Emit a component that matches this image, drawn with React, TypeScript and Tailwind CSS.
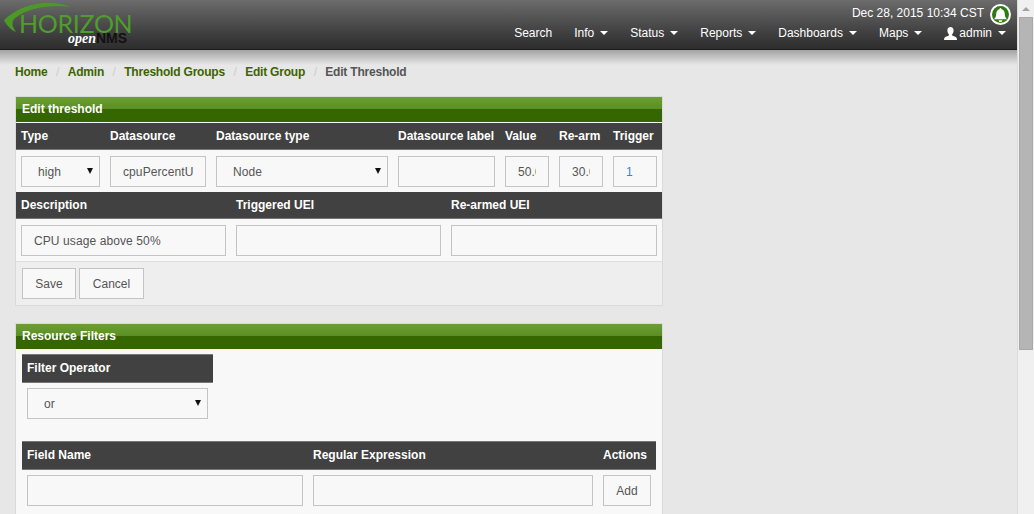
import React from "react";

const navItems = ["Info", "Status", "Reports", "Dashboards", "Maps"];
const crumbs = ["Home", "Admin", "Threshold Groups", "Edit Group"];

const inputClass =
  "w-full h-[31px] border border-[#c4c4c4] bg-[#f8f8f8] px-3 text-[12px] tracking-[0.1px] outline-none";

const Caret = () => (
  <span className="inline-block ml-[6px] w-0 h-0 border-x-[4px] border-x-transparent border-t-[4px] border-t-white" />
);

const Field = ({ value = "", blue = false }: { value?: string; blue?: boolean }) => (
  <input readOnly value={value} className={inputClass + (blue ? " text-[#3b86c6]" : " text-[#555]")} />
);

const Select = ({ value }: { value: string }) => (
  <div className="relative">
    <select defaultValue={value} className={inputClass + " text-[#555] appearance-none pl-4"}>
      <option>{value}</option>
    </select>
    <svg width="6" height="6" viewBox="0 0 6 6" className="absolute right-[7px] top-[12px]">
      <path d="M0 0h6L3 6z" fill="#111" />
    </svg>
  </div>
);

const PanelHeading = ({ title }: { title: string }) => (
  <div className="h-[25px] flex flex-col relative">
    <div className="h-[12px] bg-gradient-to-b from-[#6c9e33] to-[#5a8f24]" />
    <div className="h-[13px] bg-[#366600]" />
    <span className="absolute left-[6px] top-[5px] text-[12px] leading-[14px] font-bold text-white">{title}</span>
  </div>
);

const HeadRow = ({ children, className }: { children: React.ReactNode; className: string }) => (
  <div
    className={
      "bg-[#414141] border-y border-b-[#777] pb-[1px] items-center text-[12px] font-bold text-white " + className
    }
  >
    {children}
  </div>
);

export default function App() {
  return (
    <div className="flex h-[514px] overflow-hidden bg-[#e7e7e7] font-['Liberation_Sans',Arial,sans-serif] text-[12px]">
      <div className="w-[1017px] shrink-0 flex flex-col">
        <header className="h-[50px] shrink-0 flex justify-between bg-gradient-to-b from-[#6c6c6c] via-[#444] via-60% to-[#2d2d2d] border-b border-b-[#1c1c1c]">
          <div className="relative w-[140px]">
            <svg width="72" height="36" viewBox="0 0 72 36" className="absolute left-0 top-0">
              <path d="M70 7C55 0 25 0 4 20c3 6 7 10 12 12-4-6-5-10-1-14C28 8 50 4 70 7z" fill="#4c9a25" />
            </svg>
            <span className="absolute left-[19px] top-[13px] font-['Lato',sans-serif] font-normal text-[25px] leading-[20px] tracking-[-0.3px] text-[#4f9d2b]">
              HORIZON
            </span>
            <span className="absolute left-[68px] top-[33px] text-[14px] leading-[10px] font-bold whitespace-nowrap">
              <span className="font-['Liberation_Serif',serif] italic text-white">open</span>
              <span className="text-[#111]">NMS</span>
            </span>
          </div>
          <div className="flex flex-col items-end">
            <div className="flex items-center h-[25px] pt-[4px] pr-[6px] text-white">
              <span className="mr-[6px] mt-[-3px]">Dec 28, 2015 10:34 CST</span>
              <span className="w-[21px] h-[21px] rounded-full bg-white flex items-center justify-center">
                <span className="w-[17px] h-[17px] rounded-full bg-[#2f7a12] flex items-center justify-center">
                  <svg width="15" height="15" viewBox="0 0 16 16">
                    <path
                      d="M8 16a2 2 0 0 0 2-2H6a2 2 0 0 0 2 2zM8 1a1 1 0 0 0-1 1v.5C4.700 3 3.500 5 3.500 7c0 3-1 5-2.500 6h14c-1.500-1-2.500-3-2.500-6 0-2-1.200-4-3.500-4.500V2a1 1 0 0 0-1-1z"
                      fill="#fff"
                    />
                  </svg>
                </span>
              </span>
            </div>
            <nav className="flex items-center h-[14px] mt-[1px] text-white">
              <span className="px-[11px]">Search</span>
              {navItems.map((item) => (
                <span key={item} className="px-[11px] flex items-center">
                  {item}
                  <Caret />
                </span>
              ))}
              <span className="px-[11px] flex items-center">
                <svg width="13" height="13" viewBox="0 0 13 13" className="mr-[2px]">
                  <path
                    d="M6.500 0C8.500 0 9.600 1.500 9.600 3.500S8.500 7 8 7.500c0 1 .5 1.300 2 1.800 2 .7 3 1.200 3 3.700H0c0-2.500 1-3 3-3.700 1.500-.5 2-.8 2-1.800C4.500 7 3.400 5.500 3.400 3.500S4.500 0 6.500 0z"
                    fill="#fff"
                  />
                </svg>
                admin
                <Caret />
              </span>
            </nav>
          </div>
        </header>

        <div className="h-[15px] shrink-0 bg-gradient-to-b from-[#a3a3a3] to-[#e7e7e7]" />

        <div className="flex items-center h-[14px] pl-[15px] font-bold tracking-[-0.2px] text-[#3d6400] whitespace-nowrap">
          {crumbs.map((crumb) => (
            <React.Fragment key={crumb}>
              <span>{crumb}</span>
              <span className="px-[8.5px] font-normal text-[#ccc]">/</span>
            </React.Fragment>
          ))}
          <span className="text-[#555]">Edit Threshold</span>
        </div>

        <main className="w-[648px] ml-[15px] mt-[17px]">
          <section className="h-[210px] border border-[#dadada] bg-[#f8f8f8] flex flex-col">
            <PanelHeading title="Edit threshold" />
            <HeadRow className="h-[28px] border-t-[#f8f8f8] grid grid-cols-[89px_106px_182px_107px_54px_54px_54px]">
              <span className="pl-[5px]">Type</span>
              <span className="pl-[5px]">Datasource</span>
              <span className="pl-[5px]">Datasource type</span>
              <span className="pl-[5px] whitespace-nowrap">Datasource label</span>
              <span className="pl-[5px]">Value</span>
              <span className="pl-[5px]">Re-arm</span>
              <span className="pl-[5px]">Trigger</span>
            </HeadRow>
            <div className="grid grid-cols-[89px_106px_182px_107px_54px_54px_54px] pt-[6px] pb-[5px]">
              <div className="px-[5px]">
                <Select value="high" />
              </div>
              <div className="px-[5px]">
                <Field value="cpuPercentUtil" />
              </div>
              <div className="px-[5px]">
                <Select value="Node" />
              </div>
              <div className="px-[5px]">
                <Field />
              </div>
              <div className="px-[5px]">
                <Field value="50.0" />
              </div>
              <div className="px-[5px]">
                <Field value="30.0" />
              </div>
              <div className="px-[5px]">
                <Field value="1" blue />
              </div>
            </div>
            <HeadRow className="h-[27px] border-t-[#414141] grid grid-cols-[215px_215px_216px]">
              <span className="pl-[5px]">Description</span>
              <span className="pl-[5px]">Triggered UEI</span>
              <span className="pl-[5px]">Re-armed UEI</span>
            </HeadRow>
            <div className="grid grid-cols-[215px_215px_216px] pt-[6px] pb-[5px]">
              <div className="px-[5px]">
                <Field value="CPU usage above 50%" />
              </div>
              <div className="px-[5px]">
                <Field />
              </div>
              <div className="px-[5px]">
                <Field />
              </div>
            </div>
            <div className="flex-1 flex gap-[3px] items-start pt-[6px] pl-[6px] bg-[#eee] border-t border-t-[#ddd]">
              <button className="h-[31px] w-[54px] border border-[#c4c4c4] bg-[#f8f8f8] text-[#555]">Save</button>
              <button className="h-[31px] w-[65px] border border-[#c4c4c4] bg-[#f8f8f8] text-[#555]">Cancel</button>
            </div>
          </section>

          <section className="mt-[17px] h-[250px] border border-[#dadada] bg-[#f8f8f8]">
            <PanelHeading title="Resource Filters" />
            <div className="pl-[6px] pt-[5px]">
              <HeadRow className="h-[29px] flex w-[191px] border-t-[#777] pl-[5px]">Filter Operator</HeadRow>
              <div className="w-[181px] ml-[5px] mt-[5px]">
                <Select value="or" />
              </div>
              <HeadRow className="h-[29px] grid grid-cols-[286px_290px_58px] w-[634px] mt-[22px] border-t-[#777]">
                <span className="pl-[5px]">Field Name</span>
                <span className="pl-[5px]">Regular Expression</span>
                <span className="pl-[5px]">Actions</span>
              </HeadRow>
              <div className="grid grid-cols-[286px_290px_58px] w-[634px] pt-[5px]">
                <div className="px-[5px]">
                  <Field />
                </div>
                <div className="px-[5px]">
                  <Field />
                </div>
                <div className="px-[5px]">
                  <button className="h-[31px] w-[48px] border border-[#c4c4c4] bg-[#f8f8f8] text-[#555]">Add</button>
                </div>
              </div>
            </div>
          </section>
        </main>
      </div>

      <aside className="w-[17px] shrink-0 bg-[#f0f0f0] border-l border-l-[#dcdcdc] flex flex-col items-center">
        <div className="h-[17px] flex items-center justify-center">
          <span className="w-0 h-0 border-x-[4px] border-x-transparent border-b-[4px] border-b-[#a3a3a3]" />
        </div>
        <div className="w-[14px] h-[333px] bg-[#b5b5b5] border border-[#a9a9a9]" />
      </aside>
    </div>
  );
}
